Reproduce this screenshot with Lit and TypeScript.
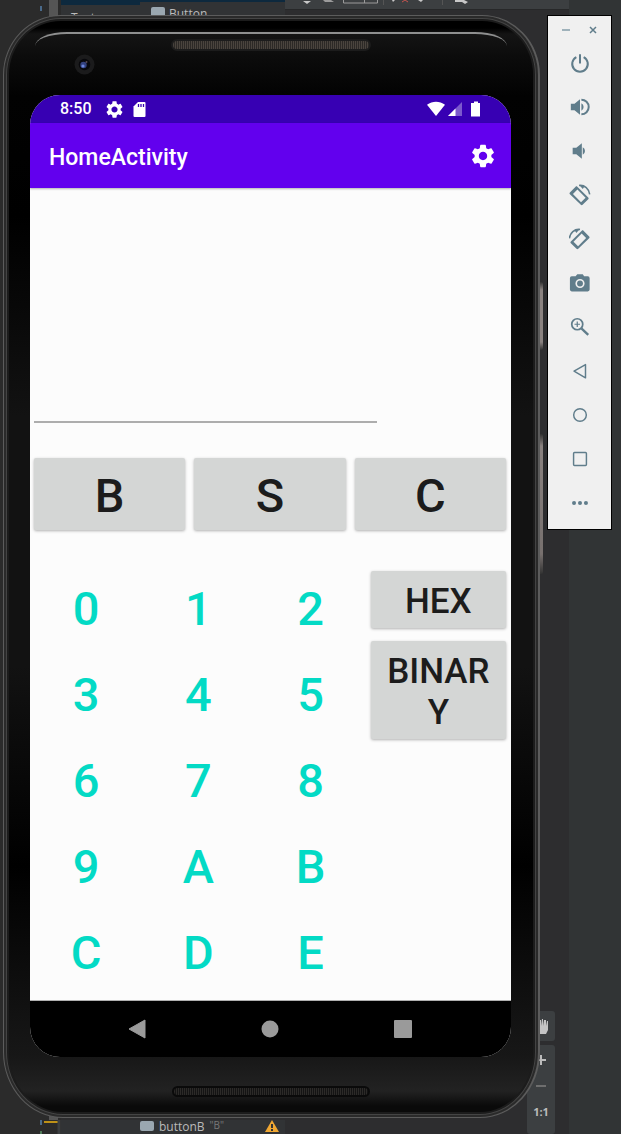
import { LitElement, html, css, svg } from "lit";
import { customElement, state } from "lit/decorators.js";

const GEAR =
  "M19.14 12.94c.04-.3.06-.61.06-.94s-.02-.64-.07-.94l2.03-1.58c.18-.14.23-.41.12-.61l-1.92-3.32c-.12-.22-.37-.29-.59-.22l-2.39.96c-.5-.38-1.03-.7-1.62-.94l-.36-2.54c-.04-.24-.24-.41-.48-.41h-3.84c-.24 0-.43.17-.47.41l-.36 2.54c-.59.24-1.13.57-1.62.94l-2.39-.96c-.22-.08-.47 0-.59.22L2.74 8.87c-.12.21-.08.47.12.61l2.03 1.58c-.05.3-.09.63-.09.94s.02.64.07.94l-2.03 1.58c-.18.14-.23.41-.12.61l1.92 3.32c.12.22.37.29.59.22l2.39-.96c.5.38 1.03.7 1.62.94l.36 2.54c.05.24.24.41.48.41h3.84c.24 0 .44-.17.47-.41l.36-2.54c.59-.24 1.13-.56 1.62-.94l2.39.96c.22.08.47 0 .59-.22l1.92-3.32c.12-.22.07-.47-.12-.61l-2.01-1.58zM12 15.6c-1.98 0-3.6-1.62-3.6-3.6s1.62-3.6 3.6-3.6 3.6 1.62 3.6 3.6-1.62 3.6-3.6 3.6z";

@customElement("editor-backdrop")
class EditorBackdrop extends LitElement {
  static styles = css`
    :host {
      display: grid;
      grid-template-rows: 1fr 14px;
      background: #2d2d2f;
      color: #bbbbbb;
      font: 12px/14px "Open Sans", "Noto Sans", sans-serif;
      overflow: hidden;
    }
    .body {
      display: grid;
      grid-template-columns: 49px 9px 3px 79px 145px 284px 1fr;
      margin-bottom: -14px;
    }
    .gutter {
      background: #2b2b2b;
    }
    .mark {
      width: 2px;
      height: 5px;
      margin: 6px 0 0 40px;
      background: #4a6a8a;
    }
    .scroll {
      background: #555555;
    }
    .groups,
    .items {
      height: 40px;
      background: #313335;
      border-top: 5px solid #0d293e;
    }
    .groups {
      padding: 6px 0 0 10px;
    }
    .items {
      display: flex;
      gap: 4px;
      border-top-width: 2px;
      padding: 5px 0 0 11px;
    }
    .chip {
      width: 14px;
      height: 10px;
      border-radius: 2px;
      background: #9aa7b0;
    }
    .tools {
      height: 9px;
      background: #3c3f41;
      border-bottom: 1px solid #272829;
    }
    .tools svg,
    .zoom svg {
      display: block;
    }
    .canvas {
      display: flex;
      flex-direction: column;
      justify-content: space-between;
    }
    .zoom {
      align-self: flex-end;
      width: 28px;
      margin-right: 14px;
    }
    .hand,
    .steps {
      background: #3c3f41;
      border-radius: 3px;
    }
    .hand {
      height: 30px;
      margin-bottom: 4px;
    }
    .steps {
      height: 89px;
    }
    .ratio {
      font: 700 11px/14px "Open Sans", sans-serif;
      text-align: center;
      margin-top: 6px;
    }
    .side {
      background: #313435;
    }
    .footer {
      display: flex;
      background: linear-gradient(#2d2d2f, #2d2d2f) right / calc(100% - 285px) 100% no-repeat;
      width: 285px;
      z-index: 1;
    }
    .marks {
      width: 61px;
      background: #2b2b2b;
    }
    .tree {
      display: flex;
      align-items: flex-start;
      gap: 5px;
      flex: 1;
      padding: 0 6px 0 79px;
      background: #313335;
    }
    .tree .chip {
      margin-top: 1px;
    }
    .hint {
      color: #787878;
      font-size: 10px;
      margin-top: -2px;
      flex: 1;
    }
  `;

  render() {
    return html`
      <div class="body">
        <div class="gutter"><div class="mark"></div></div>
        <div class="scroll"></div>
        <div class="gutter"></div>
        <div class="groups">Text</div>
        <div class="items"><span class="chip"></span>Button</div>
        <div class="canvas">
          <div class="tools">
            <svg width="284" height="8" viewBox="285 0 284 8">
              <path d="M303 1h8l-4 3z" fill="#c8c8c8" />
              <path d="M323 0h8l3 2h-9z" fill="#9b9b9b" />
              <path d="M343.500 0v3h34v-3M364.500 0v3" fill="none" stroke="#9b9b9b" />
              <path d="M383.500 0v5M442.500 0v5" stroke="#555" />
              <path d="M392 0h3l-2 2zM418 0h5l-2 2zM455 0h9l4 2-3 2-3-2h-7z" fill="#c8c8c8" />
              <path d="M402 2l3-2 3 2" fill="none" stroke="#c75450" />
            </svg>
          </div>
          <div class="zoom">
            <div class="hand">
              <svg width="28" height="30" viewBox="0 0 28 30">
                <path d="M8 14l4 2V9h2v6l1-7h1v7l1-6h2v6l1-5h1v9l-2 4h-8z" fill="#c4c4c4" />
              </svg>
            </div>
            <div class="steps">
              <svg width="28" height="54" viewBox="0 0 28 54">
                <path d="M9 15h10M14 10v10" stroke="#bbb" stroke-width="2" />
                <path d="M9 41h10" stroke="#6e6e6e" stroke-width="2" />
              </svg>
              <div class="ratio">1:1</div>
            </div>
          </div>
        </div>
        <div class="side"></div>
      </div>
      <div class="footer">
        <svg class="marks" width="61" height="14" viewBox="0 0 61 14">
          <path d="M41 0v5" stroke="#4a6a8a" stroke-width="2" />
          <path d="M41 11v3" stroke="#4f7a58" stroke-width="2" />
          <path d="M44 2h14" stroke="#be9117" stroke-width="2" />
          <path d="M59 0v14" stroke="#3c3f41" stroke-width="3" />
        </svg>
        <div class="tree">
          <span class="chip"></span>buttonB<span class="hint">"B"</span>
          <svg width="14" height="12" viewBox="0 0 14 12">
            <path d="M7 0l7 12H0z" fill="#f0a732" />
            <path d="M6 4h2v4H6zM6 9h2v2H6z" fill="#313335" />
          </svg>
        </div>
      </div>
    `;
  }
}

@customElement("emulator-toolbar")
class EmulatorToolbar extends LitElement {
  static styles = css`
    :host {
      display: flex;
      flex-direction: column;
      box-sizing: border-box;
      width: 65px;
      padding-bottom: 4px;
      border: 1px solid #000;
      background: #f0f0f0;
      color: #607d8b;
    }
    .window {
      display: flex;
      justify-content: space-between;
      padding: 4px 8px 1px;
    }
    button {
      display: flex;
      align-items: center;
      justify-content: center;
      height: 44px;
      padding: 0;
      border: 0;
      background: none;
      color: inherit;
    }
    .window button {
      width: 20px;
      height: 20px;
    }
  `;

  private tools = [
    { label: "Power", art: svg`<path d="M8 5.500a8.500 8.500 0 1 0 8 0M12 2.500v10" fill="none" stroke="currentColor" stroke-width="2.200"/>` },
    { label: "Volume up", art: svg`<path d="M2 8.500v7h4l6 5V3.500l-6 5zM13.500 8v8a4.500 4.500 0 0 0 0-8z" fill="currentColor"/><path d="M13.500 4a8 8 0 0 1 0 16" fill="none" stroke="currentColor" stroke-width="2.200"/>` },
    { label: "Volume down", art: svg`<path d="M4 8.500v7h4l6 5V3.500l-6 5zM15 8v8a4.500 4.500 0 0 0 0-8z" fill="currentColor"/>` },
    { label: "Rotate left", art: svg`<path d="M1 9.200 7.200 3c.6-.6 1.300-.6 1.900 0L21 14.600c.6.600.6 1.300 0 1.900l-6.200 6.200c-.6.600-1.300.600-1.900 0L1 11.100c-.6-.6-.6-1.300 0-1.900zM4.300 11l8.800 8.900 5-5L9.200 6z" fill="currentColor" fill-rule="evenodd"/><path d="M11 1.600c6-.8 11 3.900 11.600 9.700" fill="none" stroke="currentColor" stroke-width="1.700"/><path d="M11 .8l6 1.700-2 3z" fill="currentColor"/>` },
    { label: "Rotate right", art: svg`<g transform="matrix(-1 0 0 1 23 0)"><path d="M1 9.200 7.200 3c.6-.6 1.300-.6 1.900 0L21 14.600c.6.600.6 1.300 0 1.900l-6.200 6.200c-.6.600-1.300.600-1.900 0L1 11.100c-.6-.6-.6-1.300 0-1.900zM4.300 11l8.800 8.900 5-5L9.200 6z" fill="currentColor" fill-rule="evenodd"/><path d="M11 1.600c6-.8 11 3.900 11.600 9.700" fill="none" stroke="currentColor" stroke-width="1.700"/><path d="M11 .8l6 1.700-2 3z" fill="currentColor"/></g>` },
    { label: "Screenshot", art: svg`<path d="M9 2.500 7.200 4.700H3a2 2 0 0 0-2 2v12.500a2 2 0 0 0 2 2h17.500a2 2 0 0 0 2-2V6.700a2 2 0 0 0-2-2h-4L15 2.500zm3 15a5 5 0 1 1 0-10 5 5 0 0 1 0 10z" fill="currentColor"/><circle cx="12" cy="12.500" r="3.200" fill="currentColor"/>` },
    { label: "Zoom", art: svg`<circle cx="9" cy="9" r="6" fill="none" stroke="currentColor" stroke-width="1.900"/><path d="M13.500 13.500l7.500 7" stroke="currentColor" stroke-width="2.600"/><path d="M9 6v6M6 9h6" stroke="currentColor" stroke-width="1.300"/>` },
    { label: "Back", art: svg`<path d="M18 5v14.500L5.500 12.200z" fill="none" stroke="currentColor" stroke-width="1.600" stroke-linejoin="round"/>` },
    { label: "Home", art: svg`<circle cx="12" cy="12" r="6.900" fill="none" stroke="currentColor" stroke-width="1.600"/>` },
    { label: "Overview", art: svg`<rect x="5" y="5" width="14" height="14" rx="1" fill="none" stroke="currentColor" stroke-width="1.600"/>` },
    { label: "More", art: svg`<g fill="currentColor"><circle cx="5.500" cy="12" r="2.200"/><circle cx="12" cy="12" r="2.200"/><circle cx="18.500" cy="12" r="2.200"/></g>` },
  ];

  render() {
    return html`
      <div class="window">
        <button aria-label="Minimize">
          <svg width="10" height="10" viewBox="0 0 10 10"><path d="M1 5h8" stroke="#9fb2bb" stroke-width="2" /></svg>
        </button>
        <button aria-label="Close">
          <svg width="10" height="10" viewBox="0 0 10 10">
            <path d="M2 2l6 6M8 2l-6 6" stroke="currentColor" stroke-width="1.500" />
          </svg>
        </button>
      </div>
      ${this.tools.map(
        (t) => html`<button aria-label=${t.label}>
          <svg width="22" height="22" viewBox="0 0 24 24">${t.art}</svg>
        </button>`
      )}
    `;
  }
}

@customElement("home-activity")
class HomeActivity extends LitElement {
  static styles = css`
    :host {
      display: flex;
      flex-direction: column;
      border-radius: 30px;
      overflow: hidden;
      background: #fcfcfc;
      font-family: Roboto, sans-serif;
      font-weight: 500;
    }
    svg {
      display: block;
    }
    button {
      padding: 0;
      border: 0;
      background: none;
      font: inherit;
      color: inherit;
    }
    .status {
      display: flex;
      align-items: center;
      height: 28px;
      padding: 0 30px;
      background: #3700b3;
      color: #fff;
      font-size: 16px;
      line-height: 20px;
    }
    .clock {
      margin-right: 14px;
    }
    .notes {
      flex: 1;
      display: flex;
      gap: 10px;
    }
    .appbar {
      display: flex;
      align-items: center;
      justify-content: space-between;
      height: 65px;
      padding: 0 14px 0 19px;
      background: #6200ee;
      box-shadow: 0 1px 2px rgba(0, 0, 0, 0.3);
      color: #fff;
    }
    h1 {
      margin: 0;
      padding-top: 3px;
      font-size: 23px;
      line-height: 27px;
      font-weight: 500;
    }
    .entry {
      box-sizing: border-box;
      width: 73%;
      height: 235px;
      padding: 0 4px;
    }
    .entry input {
      box-sizing: border-box;
      display: block;
      width: 100%;
      height: 100%;
      padding: 0 0 8px;
      border: 0;
      border-bottom: 2px solid #adadad;
      border-radius: 0;
      outline: 0;
      background: none;
      color: #1c1c1c;
      font: 500 47px/55px Roboto, sans-serif;
    }
    .ops {
      display: grid;
      grid-template-columns: repeat(3, 1fr);
      gap: 9px;
      padding: 35px 5px 35px 4px;
    }
    .raised {
      border-radius: 2px;
      background: #d4d6d5;
      box-shadow: 0 1px 3px rgba(0, 0, 0, 0.3);
      color: #1c1c1c;
    }
    .ops .raised {
      height: 72px;
      padding-top: 3px;
      font-size: 47px;
      line-height: 55px;
    }
    .pad {
      flex: 1;
      display: grid;
      grid-template-columns: 7fr 3fr;
      padding-bottom: 5px;
    }
    .keys {
      display: grid;
      grid-template-columns: repeat(3, 1fr);
      grid-auto-rows: minmax(60px, 1fr);
      color: #03dac5;
      font-size: 47px;
      line-height: 55px;
    }
    .keys button {
      padding-top: 1px;
    }
    .modes {
      display: flex;
      flex-direction: column;
      gap: 13px;
      padding: 6px 5px 6px 4px;
      font-size: 35px;
      line-height: 41px;
    }
    .modes .raised {
      padding: 10px 15px 6px;
      overflow-wrap: anywhere;
    }
    .nav {
      display: flex;
      align-items: center;
      justify-content: center;
      gap: 85px;
      height: 56px;
      padding-right: 2px;
      border-top: 1px solid #b0b0b0;
      background: #000;
      color: #9a9a9a;
    }
    .nav button {
      display: grid;
      place-items: center;
      width: 48px;
      height: 48px;
    }
  `;

  @state() private value = "";

  private press(key: string) {
    this.value += key;
  }

  render() {
    const keys = ["0", "1", "2", "3", "4", "5", "6", "7", "8", "9", "A", "B", "C", "D", "E"];
    return html`
      <div class="status">
        <span class="clock">8:50</span>
        <div class="notes">
          <svg width="17" height="17" viewBox="2 2 20 20"><path d=${GEAR} fill="currentColor" /></svg>
          <svg width="13" height="17" viewBox="0 0 13 17">
            <path d="M5 1h6.500a1 1 0 0 1 1 1v13a1 1 0 0 1-1 1H1.500a1 1 0 0 1-1-1V5.500z" fill="#fff" />
            <path d="M5.500 3v3M8 3v3M10.500 3v3" stroke="#3700b3" stroke-width="1.300" />
          </svg>
        </div>
        <svg width="55" height="18" viewBox="0 0 55 18">
          <path d="M1 4.800C6.500.600 13.500.600 19 4.800L10 16z" fill="#fff" />
          <path d="M36 2v14H22z" fill="#fff" fill-opacity=".35" />
          <path d="M29.500 8.500V16H22z" fill="#fff" />
          <path d="M46 3h2V1.500h4V3h2v13.500h-9V3z" fill="#fff" />
        </svg>
      </div>
      <div class="appbar">
        <h1>HomeActivity</h1>
        <button aria-label="Settings">
          <svg width="28" height="28" viewBox="0 0 24 24"><path d=${GEAR} fill="currentColor" /></svg>
        </button>
      </div>
      <div class="entry"><input type="text" aria-label="Value" .value=${this.value} /></div>
      <div class="ops">
        ${["B", "S", "C"].map((op) => html`<button class="raised">${op}</button>`)}
      </div>
      <div class="pad">
        <div class="keys">
          ${keys.map((k) => html`<button @click=${() => this.press(k)}>${k}</button>`)}
        </div>
        <div class="modes">
          <button class="raised">HEX</button>
          <button class="raised">BINARY</button>
        </div>
      </div>
      <div class="nav">
        <button aria-label="Back">
          <svg width="18" height="20" viewBox="0 0 18 20"><path d="M17 1v18L1 10z" fill="currentColor" stroke="currentColor" stroke-linejoin="round" /></svg>
        </button>
        <button aria-label="Home">
          <svg width="18" height="18" viewBox="0 0 18 18"><circle cx="9" cy="9" r="8.500" fill="currentColor" /></svg>
        </button>
        <button aria-label="Overview">
          <svg width="18" height="18" viewBox="0 0 18 18"><rect width="18" height="18" rx="1" fill="currentColor" /></svg>
        </button>
      </div>
    `;
  }
}

@customElement("app-root")
class AppRoot extends LitElement {
  static styles = css`
    :host {
      display: flex;
      align-items: flex-start;
      gap: 7px;
      position: relative;
      box-sizing: border-box;
      min-height: 100vh;
      padding: 15px 9px 16px 3px;
    }
    .backdrop {
      position: absolute;
      inset: 0;
    }
    .phone {
      position: relative;
      align-self: stretch;
      flex: 1;
      display: flex;
      flex-direction: column;
      box-sizing: border-box;
      padding: 0 27px 0 26px;
      border: 1px solid #5c5c5c;
      border-right-width: 2px;
      border-radius: 58px 58px 60px 60px / 60px 60px 66px 66px;
      background: linear-gradient(#000 0, #000 12px, #141414 18px, #0c0c0c 40px, #020202 80px, #000 200px, #121212 400px, #121212 650px, #000 850px, #171717 1040px, #222 1075px, #0a0a0a 1090px);
      box-shadow: inset 0 0 0 2px #2a2a2a, inset 0 0 0 3px #444, inset 0 0 0 5px #1c1c1c;
    }
    .shine {
      position: absolute;
      inset: 16px 31px auto;
      height: 14px;
      border-top: 2px solid #8f9090;
      border-radius: 32px 32px 0 0 / 14px 14px 0 0;
    }
    .top {
      display: grid;
      grid-template-columns: 108px 1fr 108px;
      height: 79px;
      box-sizing: border-box;
      padding-top: 23px;
    }
    .camera {
      width: 21px;
      height: 21px;
      margin: 15px 0 0 44px;
    }
    .grille {
      width: 200px;
      height: 12px;
      box-sizing: border-box;
      justify-self: center;
      border: 2px solid #1c1c1c;
      border-radius: 6px;
      background: repeating-linear-gradient(90deg, #4a443e 0 1px, #2c2926 1px 2px);
    }
    home-activity {
      flex: 1;
    }
    .bottom {
      display: flex;
      justify-content: center;
      align-items: flex-start;
      height: 60px;
      box-sizing: border-box;
      padding-top: 29px;
    }
    .bottom .grille {
      width: 198px;
      height: 11px;
      background: repeating-linear-gradient(90deg, #2c2a28 0 1px, #141414 1px 2px);
      border-color: #0a0a0a;
    }
    .rocker {
      position: absolute;
      right: -5px;
      top: 266px;
      width: 3px;
      height: 68px;
      border-radius: 0 2px 2px 0;
      background: linear-gradient(#333, #8a8280 8px, #8a8280 60px, #333);
    }
    .rocker.long {
      top: 418px;
      height: 140px;
      background: linear-gradient(#333, #8a8280 12px, #77706e 120px, #333);
    }
    emulator-toolbar {
      position: relative;
    }
  `;

  render() {
    return html`
      <editor-backdrop class="backdrop"></editor-backdrop>
      <div class="phone">
        <div class="rocker"></div>
        <div class="rocker long"></div>
        <div class="shine"></div>
        <div class="top">
          <svg class="camera" viewBox="0 0 21 21">
            <circle cx="10.500" cy="10.500" r="10" fill="#1b1b1c" />
            <circle cx="10.500" cy="10.500" r="5.800" fill="#08080c" />
            <circle cx="9.500" cy="11" r="3.200" fill="#33417f" />
            <circle cx="9" cy="12" r="1.600" fill="#6b86dc" />
            <circle cx="12.500" cy="8" r="1" fill="#5a4a55" />
          </svg>
          <div class="grille"></div>
        </div>
        <home-activity></home-activity>
        <div class="bottom"><div class="grille"></div></div>
      </div>
      <emulator-toolbar></emulator-toolbar>
    `;
  }
}
